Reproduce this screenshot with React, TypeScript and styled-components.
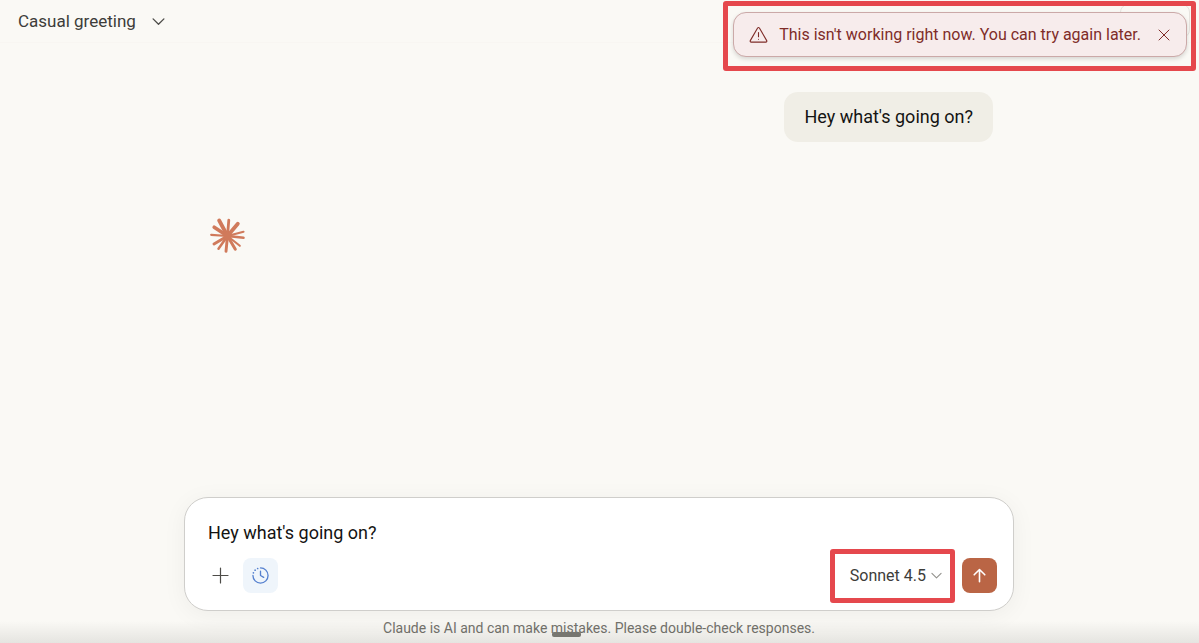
import React from 'react';
import styled, { createGlobalStyle, css } from 'styled-components';

const GlobalStyle = createGlobalStyle`
  * { box-sizing: border-box; }
  body {
    margin: 0;
    background: #faf9f5;
    color: #141413;
    font-family: Roboto, "Noto Sans", sans-serif;
    font-size: 18px;
    line-height: 24px;
  }
  button, textarea { font: inherit; color: inherit; }
`;

const Page = styled.div`
  position: relative;
  display: flex;
  flex-direction: column;
  min-height: 100vh;
  padding-right: 1px;
  overflow: hidden;
`;

const Header = styled.header`
  display: flex;
  align-items: center;
  justify-content: space-between;
  height: 43px;
  padding: 0 8px 0 18px;
  border-bottom: 1px solid #f8f6f2;
`;

const plainButton = css`
  display: inline-flex;
  align-items: center;
  justify-content: center;
  padding: 0;
  border: 0;
  background: none;
  cursor: pointer;
`;

const TitleButton = styled.button`
  ${plainButton}
  gap: 16px;
  color: #3d3d3a;
  font-size: 17px;
`;

const ShareButton = styled.button`
  ${plainButton}
  width: 70px;
  height: 34px;
  border: 1px solid #e6e3de;
  border-radius: 8px;
`;

const Highlight = styled.div`
  border: 5px solid #e5484d;
  border-radius: 3px;
`;

const ToastHighlight = styled(Highlight)`
  position: absolute;
  top: 1px;
  right: 3px;
  padding: 6px 4px 9px 5px;
`;

const Toast = styled.div`
  display: flex;
  align-items: center;
  height: 45px;
  padding: 0 16px 0 15px;
  border: 1px solid #cba9a8;
  border-radius: 13px;
  background: #f7ecec;
  color: #7f2c28;
  font-size: 16px;
  white-space: nowrap;
  box-shadow: 0 2px 4px rgba(0, 0, 0, 0.14);
`;

const ToastText = styled.span`
  margin: 0 17px 0 11px;
`;

const CloseButton = styled.button`
  ${plainButton}
`;

const Conversation = styled.main`
  flex: 1;
  display: flex;
  flex-direction: column;
  width: 100%;
  max-width: 830px;
  margin: 0 auto;
  padding: 49px 21px 0 25px;
`;

const UserMessage = styled.p`
  align-self: flex-end;
  margin: 0;
  padding: 13px 20px;
  border-radius: 14px;
  background: #f0eee6;
`;

const Spark = styled.svg`
  margin-top: 76px;
`;

const Footer = styled.footer`
  width: 100%;
  max-width: 830px;
  margin: 0 auto;
`;

const Composer = styled.form`
  height: 114px;
  padding: 23px 16px 16px 18px;
  border: 1px solid #cfcecb;
  border-radius: 24px;
  background: #fff;
  box-shadow: 0 4px 24px rgba(0, 0, 0, 0.05);
`;

const Prompt = styled.textarea`
  display: block;
  width: 100%;
  height: 24px;
  margin-bottom: 13px;
  padding: 0 5px;
  border: 0;
  outline: 0;
  resize: none;
  overflow: hidden;
  background: none;
`;

const Toolbar = styled.div`
  display: flex;
  align-items: center;
  gap: 5px;
  height: 35px;
`;

const ToolButton = styled.button<{ $tone?: 'active' | 'send' }>`
  ${plainButton}
  width: 35px;
  height: 35px;
  border-radius: 8px;
  color: #4d4c48;
  ${p => p.$tone === 'active' && css`background: #eff5fb; color: #5580cf;`}
  ${p => p.$tone === 'send' && css`background: #ba6545; color: #fff;`}
`;

const ModelHighlight = styled(Highlight)`
  display: flex;
  margin: 0 2px 0 auto;
`;

const ModelButton = styled.button`
  ${plainButton}
  height: 44px;
  padding: 0 8px 0 15px;
  gap: 5px;
  color: #3d3d3a;
  font-size: 16px;
`;

const Disclaimer = styled.p`
  margin: 0;
  padding: 7px 0 5px;
  color: #73726c;
  font-size: 14px;
  line-height: 20px;
  text-align: center;
`;

const BottomFade = styled.div`
  position: absolute;
  right: 0;
  bottom: 0;
  left: 0;
  height: 22px;
  background: linear-gradient(rgba(20, 20, 15, 0), rgba(20, 20, 15, 0.09));
  pointer-events: none;
`;

const Handle = styled.div`
  position: absolute;
  bottom: 6px;
  left: calc(50% - 48px);
  width: 29px;
  height: 5px;
  border-radius: 2px;
  background: #777670;
`;

const Chevron = ({ width, color }: { width: number; color: string }) => (
  <svg width={width} height={width} viewBox="0 0 12 12" fill="none" stroke={color} strokeWidth="1.2" strokeLinecap="round" strokeLinejoin="round" aria-hidden="true">
    <path d="M1 3.6 6 8.6 11 3.6" />
  </svg>
);

const rays: [number, number, number][] = [
  [9.2, 2.5, 3.8], [18.8, 2.2, 2.8], [27.8, 5.8, 3.8], [33.5, 13.8, 2.2],
  [33.5, 19.8, 2.6], [29.8, 27.8, 2.1], [25.3, 31.2, 3], [16, 33.4, 2.9],
  [8.5, 30.8, 2.5], [4, 26, 2.9], [1.2, 16.8, 2.2], [4.2, 9.2, 3.6],
];

export default function App() {
  return (
    <>
      <GlobalStyle />
      <Page>
        <Header>
          <TitleButton type="button">
            Casual greeting
            <Chevron width={13} color="#4d4c48" />
          </TitleButton>
          <ShareButton type="button" aria-label="Share" />
        </Header>

        <Conversation>
          <UserMessage>Hey what's going on?</UserMessage>
          <Spark width="36" height="36" viewBox="0 0 36 36" role="img" aria-label="Claude is thinking">
            <g transform="translate(1 0)" stroke="#d07a5b" strokeLinecap="round">
              {rays.map(([x, y, w]) => (
                <line key={`${x}-${y}`} x1="17.5" y1="18" x2={x} y2={y} strokeWidth={w} />
              ))}
              <circle cx="17.5" cy="18" r="4" fill="#d07a5b" stroke="none" />
            </g>
          </Spark>
        </Conversation>

        <Footer>
          <Composer onSubmit={e => e.preventDefault()}>
            <Prompt aria-label="Message" rows={1} defaultValue="Hey what's going on?" />
            <Toolbar>
              <ToolButton type="button" aria-label="Add content">
                <svg width="17" height="17" viewBox="0 0 17 17" stroke="currentColor" strokeWidth="1.2" strokeLinecap="round">
                  <path d="M8.5 1v15M1 8.5h15" />
                </svg>
              </ToolButton>
              <ToolButton type="button" $tone="active" aria-label="Extended thinking">
                <svg width="17" height="17" viewBox="0 0 18 18" fill="none" stroke="currentColor" strokeWidth="1.4" strokeLinecap="round" strokeLinejoin="round">
                  <path d="M9 1a8 8 0 1 1-8 8" />
                  <path d="M9 4.5V9l3.4 2" />
                  <path d="M1.5 6.2v0M3.3 3.4v0M6 1.6v0" strokeWidth="1.8" />
                </svg>
              </ToolButton>
              <ModelHighlight>
                <ModelButton type="button">
                  Sonnet 4.5
                  <Chevron width={11} color="#93928d" />
                </ModelButton>
              </ModelHighlight>
              <ToolButton type="submit" $tone="send" aria-label="Send message">
                <svg width="15" height="15" viewBox="0 0 15 15" fill="none" stroke="currentColor" strokeWidth="1.6" strokeLinecap="round" strokeLinejoin="round">
                  <path d="M7.5 13.8V1.5M2.2 6.8l5.3-5.3 5.3 5.3" />
                </svg>
              </ToolButton>
            </Toolbar>
          </Composer>
          <Disclaimer>Claude is AI and can make mistakes. Please double-check responses.</Disclaimer>
        </Footer>

        <BottomFade />
        <Handle />

        <ToastHighlight>
          <Toast role="alert">
            <svg width="19" height="18" viewBox="0 0 19 18" fill="none" stroke="currentColor" strokeWidth="1.1" strokeLinecap="round" strokeLinejoin="round" aria-hidden="true">
              <path d="M8.6 2 1.3 14.6a1 1 0 0 0 .9 1.5h14.6a1 1 0 0 0 .9-1.5L10.4 2a1 1 0 0 0-1.8 0Z" />
              <path d="M9.5 6.5v4.3M9.5 13.2v.1" />
            </svg>
            <ToastText>This isn't working right now. You can try again later.</ToastText>
            <CloseButton type="button" aria-label="Dismiss">
              <svg width="12" height="12" viewBox="0 0 12 12" stroke="currentColor" strokeWidth="1" strokeLinecap="round">
                <path d="M1 1l10 10M11 1 1 11" />
              </svg>
            </CloseButton>
          </Toast>
        </ToastHighlight>
      </Page>
    </>
  );
}
